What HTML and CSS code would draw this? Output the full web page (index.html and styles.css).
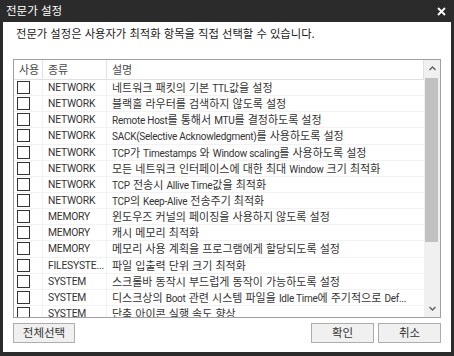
FILE: index.html
```html
<!DOCTYPE html>
<html lang="ko">
<head>
<meta charset="utf-8">
<link rel="stylesheet" href="styles.css">
</head>
<body>
<div class="window">
  <div class="titlebar">
    <span class="title">전문가 설정</span>
    <svg class="close" width="9" height="9" viewBox="0 0 9 9"><path d="M1 1 L8 8 M8 1 L1 8" stroke="#fff" stroke-width="1.8"/></svg>
  </div>
  <div class="content">
    <p class="desc">전문가 설정은 사용자가 최적화 항목을 직접 선택할 수 있습니다.</p>
    <div class="list">
      <div class="table">
        <div class="row head">
          <div class="cell c1">사용</div>
          <div class="cell c2">종류</div>
          <div class="cell c3">설명</div>
        </div>
        <div class="body">
          <div class="row"><div class="cell c1"><span class="cb"></span></div><div class="cell c2">NETWORK</div><div class="cell c3">네트워크 패킷의 기본 <span class="en">TTL</span>값을 설정</div></div>
          <div class="row"><div class="cell c1"><span class="cb"></span></div><div class="cell c2">NETWORK</div><div class="cell c3">블랙홀 라우터를 검색하지 않도록 설정</div></div>
          <div class="row"><div class="cell c1"><span class="cb"></span></div><div class="cell c2">NETWORK</div><div class="cell c3"><span class="en">Remote Host</span>를 통해서 <span class="en">MTU</span>를 결정하도록 설정</div></div>
          <div class="row"><div class="cell c1"><span class="cb"></span></div><div class="cell c2">NETWORK</div><div class="cell c3"><span class="en">SACK(Selective Acknowledgment)</span>를 사용하도록 설정</div></div>
          <div class="row"><div class="cell c1"><span class="cb"></span></div><div class="cell c2">NETWORK</div><div class="cell c3"><span class="en">TCP</span>가 <span class="en">Timestamps</span> 와 <span class="en">Window scaling</span>를 사용하도록 설정</div></div>
          <div class="row"><div class="cell c1"><span class="cb"></span></div><div class="cell c2">NETWORK</div><div class="cell c3">모든 네트워크 인터페이스에 대한 최대 <span class="en">Window</span> 크기 최적화</div></div>
          <div class="row"><div class="cell c1"><span class="cb"></span></div><div class="cell c2">NETWORK</div><div class="cell c3"><span class="en">TCP</span> 전송시 <span class="en">Allive Time</span>값을 최적화</div></div>
          <div class="row"><div class="cell c1"><span class="cb"></span></div><div class="cell c2">NETWORK</div><div class="cell c3"><span class="en">TCP</span>의 <span class="en">Keep-Alive</span> 전송주기 최적화</div></div>
          <div class="row"><div class="cell c1"><span class="cb"></span></div><div class="cell c2">MEMORY</div><div class="cell c3">윈도우즈 커널의 페이징을 사용하지 않도록 설정</div></div>
          <div class="row"><div class="cell c1"><span class="cb"></span></div><div class="cell c2">MEMORY</div><div class="cell c3">캐시 메모리 최적화</div></div>
          <div class="row"><div class="cell c1"><span class="cb"></span></div><div class="cell c2">MEMORY</div><div class="cell c3">메모리 사용 계획을 프로그램에게 할당되도록 설정</div></div>
          <div class="row"><div class="cell c1"><span class="cb"></span></div><div class="cell c2">FILESYSTE...</div><div class="cell c3">파일 입출력 단위 크기 최적화</div></div>
          <div class="row"><div class="cell c1"><span class="cb"></span></div><div class="cell c2">SYSTEM</div><div class="cell c3">스크롤바 동작시 부드럽게 동작이 가능하도록 설정</div></div>
          <div class="row"><div class="cell c1"><span class="cb"></span></div><div class="cell c2">SYSTEM</div><div class="cell c3">디스크상의 <span class="en">Boot</span> 관련 시스템 파일을 <span class="en">Idle Time</span>에 주기적으로 <span class="en">Def...</span></div></div>
          <div class="row"><div class="cell c1"><span class="cb"></span></div><div class="cell c2">SYSTEM</div><div class="cell c3">단축 아이콘 실행 속도 향상</div></div>
        </div>
      </div>
      <div class="scrollbar">
        <div class="arrow"><svg width="7" height="5" viewBox="0 0 7 5"><path d="M0.5 4 L3.5 1 L6.5 4" fill="none" stroke="#606060" stroke-width="1.4"/></svg></div>
        <div class="track"><div class="thumb"></div></div>
        <div class="arrow"><svg width="7" height="5" viewBox="0 0 7 5"><path d="M0.5 1 L3.5 4 L6.5 1" fill="none" stroke="#606060" stroke-width="1.4"/></svg></div>
      </div>
    </div>
    <div class="buttons">
      <button class="btn">전체선택</button>
      <div class="right">
        <button class="btn">확인</button>
        <button class="btn">취소</button>
      </div>
    </div>
  </div>
</div>
</body>
</html>
```

FILE: styles.css
```css
html, body {
  margin: 0;
  padding: 0;
  background: #2b2b2b;
}
body {
  font-family: Roboto, "Noto Sans CJK KR", sans-serif;
  font-size: 12px;
}
.window {
  width: 454px;
  height: 356px;
  display: flex;
  flex-direction: column;
}
.titlebar {
  height: 22px;
  display: flex;
  align-items: center;
  justify-content: space-between;
  padding: 0 8px 0 6px;
  color: #fff;
}
.title {
  font-family: "Noto Sans CJK KR", sans-serif;
  font-size: 11.5px;
  line-height: 1;
}
.close {
  display: block;
}
.content {
  flex: 1;
  margin: 0 3px 4px 3px;
  background: #fff;
  padding: 0 10px 0 10px;
  display: flex;
  flex-direction: column;
}
.desc {
  margin: 0;
  height: 37px;
  padding: 4px 0 0 3px;
  box-sizing: border-box;
  line-height: 14px;
  color: #1a1a1a;
  font-family: "Noto Sans CJK KR", sans-serif;
  font-size: 11.3px;
}
.list {
  height: 259px;
  border: 1px solid #a0a0a0;
  box-sizing: border-box;
  display: flex;
  overflow: hidden;
}
.table {
  flex: 1;
  min-width: 0;
  overflow: hidden;
  display: flex;
  flex-direction: column;
}
.row {
  display: grid;
  grid-template-columns: 29px 64px 1fr;
  height: 16.15px;
  box-sizing: border-box;
  border-bottom: 1px solid #f2f2f2;
}
.row.head {
  height: 20px;
  border-bottom: 1px solid #e0e0e0;
}
.cell {
  display: flex;
  align-items: center;
  white-space: nowrap;
  overflow: hidden;
  min-width: 0;
  color: #333;
  font-family: "Noto Sans CJK KR", sans-serif;
  font-size: 11px;
  line-height: 1;
  border-right: 1px solid #f2f2f2;
}
.cell.c2, .cell.c3 {
  padding-left: 5px;
}
.cell.c2 {
  font-family: Roboto, sans-serif;
  font-size: 10.3px;
  letter-spacing: -0.2px;
}
.row.head .cell.c2 {
  font-family: "Noto Sans CJK KR", sans-serif;
  font-size: 11px;
  letter-spacing: 0;
}
.en {
  font-family: Roboto, sans-serif;
  font-size: 10px;
  letter-spacing: -0.25px;
}
.cell.c3 {
  border-right: none;
  padding-right: 4px;
}
.c2, .c3 {
  display: block;
  text-overflow: ellipsis;
  line-height: 15px;
}
.row.head .cell {
  border-right: 1px solid #e0e0e0;
  color: #4a4a4a;
  line-height: 19px;
}
.row.head .c1 {
  padding-left: 5px;
}
.cb {
  width: 11px;
  height: 11px;
  border: 1px solid #333;
  margin-left: 3px;
  background: #fff;
}
.scrollbar {
  width: 16px;
  display: flex;
  flex-direction: column;
  background: #f0f0f0;
}
.arrow {
  height: 17px;
  display: flex;
  align-items: center;
  justify-content: center;
  background: #f0f0f0;
}
.track {
  flex: 1;
  padding: 1px 2px 0 1px;
}
.thumb {
  height: 164px;
  background: #c1c1c1;
}
.buttons {
  display: flex;
  justify-content: space-between;
  margin-top: 5px;
}
.right {
  display: flex;
  gap: 4px;
}
.btn {
  height: 20px;
  width: 62px;
  padding: 0;
  border: 1px solid #adadad;
  background: #f0f0f0;
  color: #333;
  font-family: "Noto Sans CJK KR", sans-serif;
  font-size: 11.5px;
  line-height: 1;
}
.right .btn {
  width: 63px;
}
```
